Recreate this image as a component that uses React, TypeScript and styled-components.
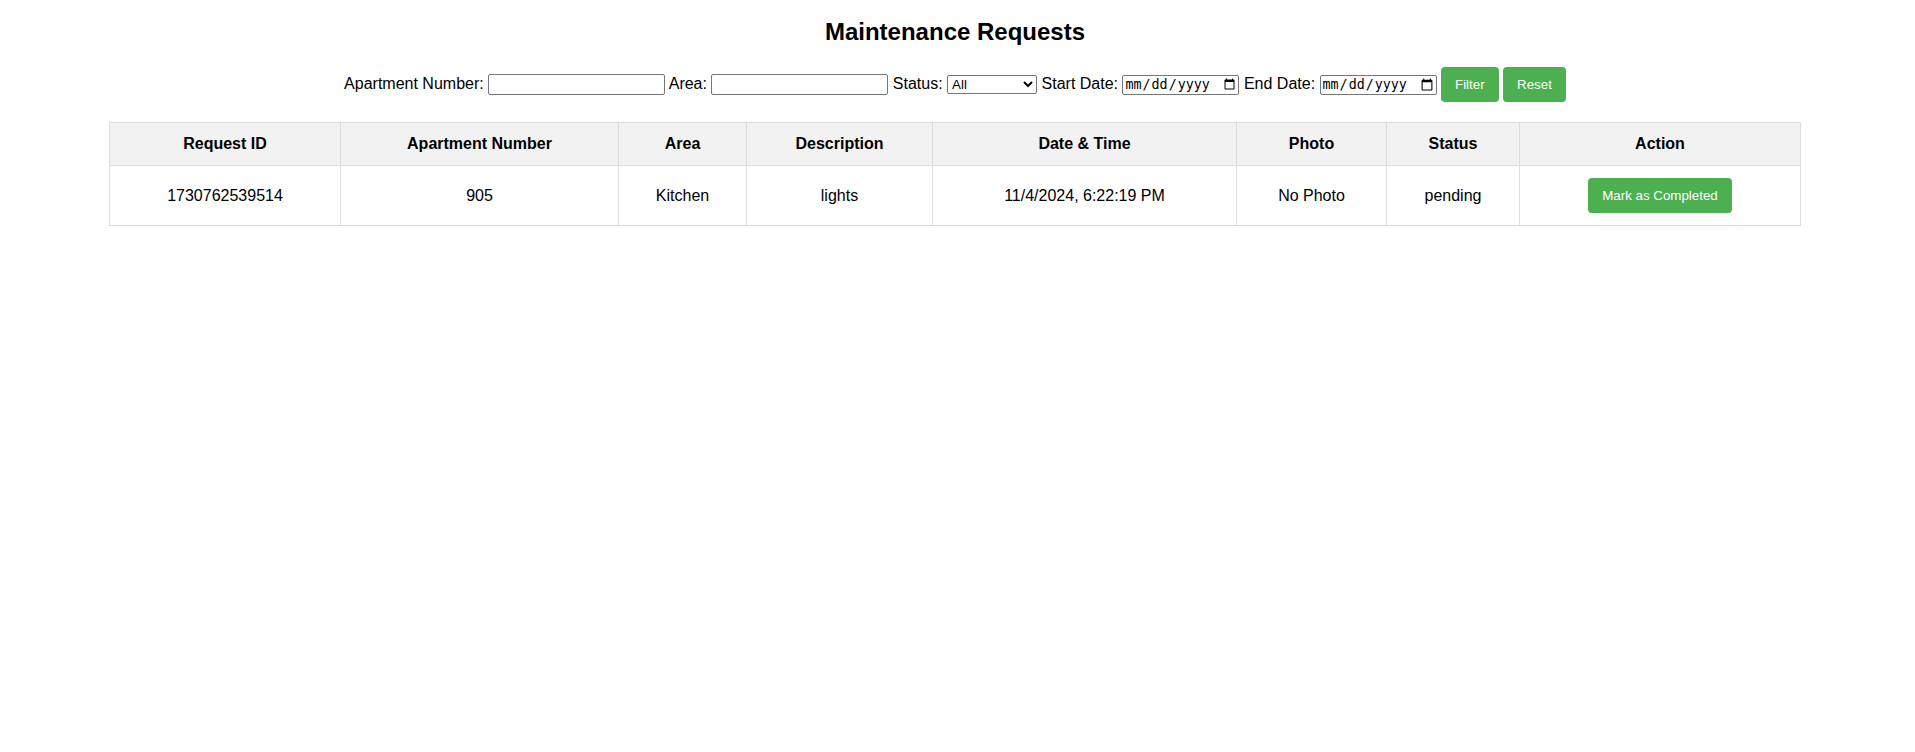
import React from "react";
import styled, { createGlobalStyle } from "styled-components";

const GlobalStyle = createGlobalStyle`
  html, body {
    margin: 0;
    padding: 0;
    background: #ffffff;
  }
  body {
    font-family: "Liberation Sans", Arial, sans-serif;
    font-size: 16px;
    color: #000000;
  }
`;

const Page = styled.div`
  padding: 0 114px 0 109px;
`;

const Title = styled.h2`
  margin: 18px 0 20px;
  font-size: 24px;
  line-height: 28px;
  font-weight: bold;
  text-align: center;
`;

const FilterBar = styled.div`
  text-align: center;
  margin-bottom: 21px;
  line-height: 35px;
  height: 35px;
  white-space: nowrap;
`;

const TextInput = styled.input`
  box-sizing: border-box;
  width: 177px;
  height: 21px;
  padding: 1px 2px;
  border: 1px solid #767676;
  border-radius: 2px;
  background: #ffffff;
  font-family: "Liberation Sans", Arial, sans-serif;
  font-size: 13.33px;
  vertical-align: middle;
`;

const Select = styled.select`
  box-sizing: border-box;
  width: 90px;
  height: 19px;
  border: 1px solid #767676;
  border-radius: 2px;
  background: #ffffff;
  color: #000000;
  font-family: "Liberation Sans", Arial, sans-serif;
  font-size: 13.33px;
  vertical-align: middle;
`;

const DateInput = styled.input`
  box-sizing: border-box;
  width: 117px;
  height: 20px;
  border: 1px solid #767676;
  border-radius: 2px;
  background: #ffffff;
  vertical-align: middle;
`;

const GreenButton = styled.button`
  background: #4caf50;
  color: #ffffff;
  border: none;
  border-radius: 4px;
  padding: 10px 14px;
  font-family: "Liberation Sans", Arial, sans-serif;
  font-size: 13.33px;
  line-height: 15px;
  cursor: pointer;
  vertical-align: middle;
`;

const Table = styled.table`
  width: 100%;
  border-collapse: collapse;
  table-layout: fixed;
`;

const HeadCell = styled.th`
  border: 1px solid #ddd;
  background: #f2f2f2;
  padding: 12px;
  font-weight: bold;
  text-align: center;
  line-height: 18px;
`;

const Cell = styled.td`
  border: 1px solid #ddd;
  padding: 12px;
  text-align: center;
  line-height: 18px;
`;

const columns = [
  { label: "Request ID", width: 231 },
  { label: "Apartment Number", width: 278 },
  { label: "Area", width: 128 },
  { label: "Description", width: 186 },
  { label: "Date & Time", width: 304 },
  { label: "Photo", width: 150 },
  { label: "Status", width: 133 },
  { label: "Action", width: 281 },
];

const rows = [
  {
    id: "1730762539514",
    apt: "905",
    area: "Kitchen",
    description: "lights",
    date: "11/4/2024, 6:22:19 PM",
    photo: "No Photo",
    status: "pending",
  },
];

export default function App() {
  return (
    <>
      <GlobalStyle />
      <Page>
        <Title>Maintenance Requests</Title>
        <FilterBar>
          Apartment Number: <TextInput type="text" /> Area: <TextInput type="text" /> Status:{" "}
          <Select defaultValue="All">
            <option>All</option>
            <option>pending</option>
            <option>completed</option>
          </Select>{" "}
          Start Date: <DateInput type="date" /> End Date: <DateInput type="date" />{" "}
          <GreenButton>Filter</GreenButton> <GreenButton>Reset</GreenButton>
        </FilterBar>
        <Table>
          <colgroup>
            {columns.map((c) => (
              <col key={c.label} style={{ width: c.width }} />
            ))}
          </colgroup>
          <thead>
            <tr>
              {columns.map((c) => (
                <HeadCell key={c.label}>{c.label}</HeadCell>
              ))}
            </tr>
          </thead>
          <tbody>
            {rows.map((r) => (
              <tr key={r.id}>
                <Cell>{r.id}</Cell>
                <Cell>{r.apt}</Cell>
                <Cell>{r.area}</Cell>
                <Cell>{r.description}</Cell>
                <Cell>{r.date}</Cell>
                <Cell>{r.photo}</Cell>
                <Cell>{r.status}</Cell>
                <Cell>
                  <GreenButton>Mark as Completed</GreenButton>
                </Cell>
              </tr>
            ))}
          </tbody>
        </Table>
      </Page>
    </>
  );
}
